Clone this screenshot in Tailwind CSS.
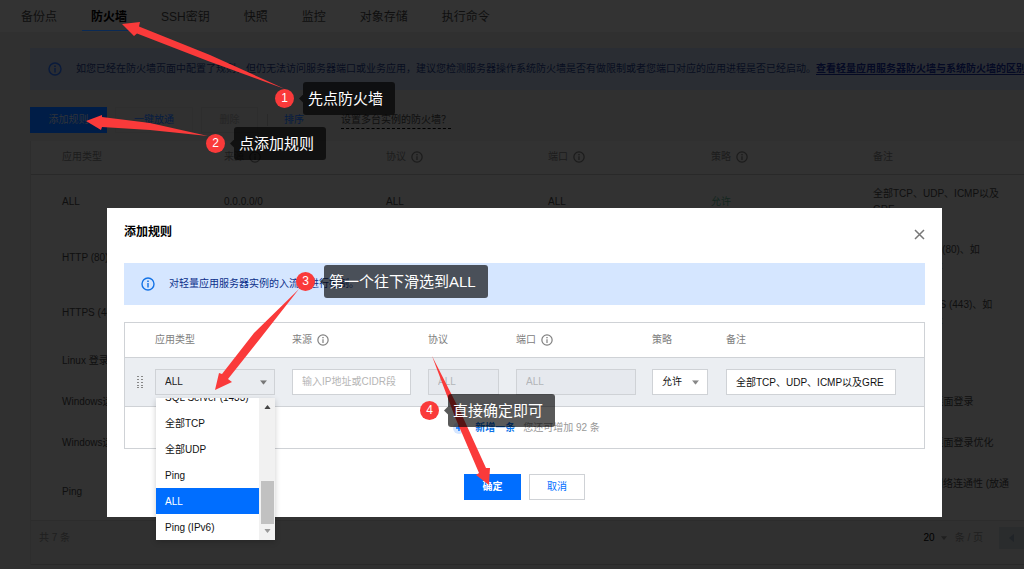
<!DOCTYPE html>
<html lang="zh-CN">

<head>
    <meta charset="UTF-8">
    <meta name="viewport" content="width=device-width, initial-scale=1.0">
    <title>防火墙 - 轻量应用服务器</title>
    <script src="https://cdn.jsdelivr.net/npm/@tailwindcss/browser@4"></script>
</head>

<body class="relative h-screen overflow-hidden bg-[#303030] font-['Liberation_Sans','Noto_Sans_CJK_SC',sans-serif] text-[10px] leading-4 text-[#0f0f0f]">
    <svg class="hidden">
        <symbol id="info" viewBox="0 0 14 14">
            <circle cx="7" cy="7" r="6" fill="none" stroke="currentColor" stroke-width="1.4" />
            <path d="M6.2 3.4h1.6v1.5H6.2zM6.3 6h1.4v4.6H6.3z" fill="currentColor" />
        </symbol>
        <symbol id="caret" viewBox="0 0 8 5">
            <path d="M0 0h8L4 5z" fill="currentColor" />
        </symbol>
    </svg>

    <!-- Página de fundo -->
    <nav class="flex h-8 gap-4 bg-[#333333] pl-3 text-xs whitespace-nowrap">
        <a href="#" class="px-[9px] pt-[9px]">备份点</a>
        <a href="#" class="h-[31px] border-b border-[#0a2a55] px-[9px] pt-[9px] font-bold text-black">防火墙</a>
        <a href="#" class="px-[9px] pt-[9px]">SSH密钥</a>
        <a href="#" class="px-[9px] pt-[9px]">快照</a>
        <a href="#" class="px-[9px] pt-[9px]">监控</a>
        <a href="#" class="px-[9px] pt-[9px]">对象存储</a>
        <a href="#" class="px-[9px] pt-[9px]">执行命令</a>
    </nav>

    <main class="overflow-hidden pt-4 pl-[30px]">
        <div class="flex h-[42px] items-center bg-[#2a2d33] pl-[18px] whitespace-nowrap text-[#080d20]">
            <svg class="mr-[14px] size-[14px] shrink-0 text-[#0a1b3c]"><use href="#info" /></svg>
            <p>如您已经在防火墙页面中配置了规则，但仍无法访问服务器端口或业务应用，建议您检测服务器操作系统防火墙是否有做限制或者您端口对应的应用进程是否已经启动。<a href="#" class="font-bold text-[#050a24] underline underline-offset-2">查看轻量应用服务器防火墙与系统防火墙的区别</a></p>
        </div>

        <div class="flex items-center pt-[17px] whitespace-nowrap">
            <button class="h-[26px] w-[77px] bg-[#001d47] text-[#30343a]">添加规则</button>
            <button class="ml-2 h-[26px] w-[78px] border border-[#2e2e2e] text-[#061c42]">一键放通</button>
            <button class="ml-2 h-[26px] w-[57px] border border-[#2d2d2d] text-[#252525]" disabled>删除</button>
            <span class="ml-[9px] h-3 w-px bg-[#292929]"></span>
            <button class="ml-2 h-[26px] w-[36px] text-[#061c42]">排序</button>
            <a href="#" class="ml-[29px] border-b border-dashed border-black leading-4">设置多台实例的防火墙？</a>
        </div>

        <div class="mt-2 border-l border-[#2d2d2d] bg-[#323232]">
            <table class="w-[1050px] table-fixed border-b border-[#2c2c2c] text-left whitespace-nowrap">
                <colgroup>
                    <col class="w-[193px]">
                    <col class="w-[162px]">
                    <col class="w-[162px]">
                    <col class="w-[163px]">
                    <col class="w-[162px]">
                    <col>
                </colgroup>
                <thead class="text-[#1c1c1c]">
                    <tr class="h-[33px] border-b border-[#292929]">
                        <th class="pl-[31px] font-normal">应用类型</th>
                        <th class="font-normal"><span class="flex items-center gap-[5px]">来源<svg class="size-3"><use href="#info" /></svg></span></th>
                        <th class="font-normal"><span class="flex items-center gap-[5px]">协议<svg class="size-3"><use href="#info" /></svg></span></th>
                        <th class="font-normal"><span class="flex items-center gap-[5px]">端口<svg class="size-3"><use href="#info" /></svg></span></th>
                        <th class="font-normal"><span class="flex items-center gap-[5px]">策略<svg class="size-3"><use href="#info" /></svg></span></th>
                        <th class="font-normal">备注</th>
                    </tr>
                </thead>
                <tbody>
                    <tr class="h-[56px]">
                        <td class="pl-[31px]">ALL</td>
                        <td>0.0.0.0/0</td>
                        <td>ALL</td>
                        <td>ALL</td>
                        <td class="text-[#14271f]">允许</td>
                        <td>全部TCP、UDP、ICMP以及<br>GRE</td>
                    </tr>
                    <tr class="h-[55px]">
                        <td class="pl-[31px]">HTTP (80)</td>
                        <td>0.0.0.0/0</td>
                        <td>TCP</td>
                        <td>80</td>
                        <td class="text-[#14271f]">允许</td>
                        <td>Web服务HTTP (80)、如<br>Apache、Nginx</td>
                    </tr>
                    <tr class="h-[55px]">
                        <td class="pl-[31px]">HTTPS (443)</td>
                        <td>0.0.0.0/0</td>
                        <td>TCP</td>
                        <td>443</td>
                        <td class="text-[#14271f]">允许</td>
                        <td>Web服务HTTPS (443)、如<br>Apache、Nginx</td>
                    </tr>
                    <tr class="h-[42px]">
                        <td class="pl-[31px]">Linux 登录 (22)</td>
                        <td>0.0.0.0/0</td>
                        <td>TCP</td>
                        <td>22</td>
                        <td class="text-[#14271f]">允许</td>
                        <td>Linux登录</td>
                    </tr>
                    <tr class="h-10">
                        <td class="pl-[31px]">Windows远程桌面</td>
                        <td>0.0.0.0/0</td>
                        <td>TCP</td>
                        <td>3389</td>
                        <td class="text-[#14271f]">允许</td>
                        <td>Windows远程桌面登录</td>
                    </tr>
                    <tr class="h-[42px]">
                        <td class="pl-[31px]">Windows远程桌面</td>
                        <td>0.0.0.0/0</td>
                        <td>UDP</td>
                        <td>3389</td>
                        <td class="text-[#14271f]">允许</td>
                        <td>Windows远程桌面登录优化</td>
                    </tr>
                    <tr class="h-[56px]">
                        <td class="pl-[31px]">Ping</td>
                        <td>0.0.0.0/0</td>
                        <td>ICMP</td>
                        <td>ALL</td>
                        <td class="text-[#14271f]">允许</td>
                        <td>通过Ping测试网络连通性 (放通<br>ALL ICMP)</td>
                    </tr>
                </tbody>
            </table>
            <div class="flex h-[44px] items-center justify-between border-b border-[#292929] bg-[#303030] pb-[8px] pl-2 whitespace-nowrap text-[#1f1f1f]">
                <span>共 7 条</span>
                <div class="flex items-center">
                    <span class="text-black">20</span>
                    <svg class="mx-[6px] h-1 w-[6px]"><use href="#caret" /></svg>
                    <span class="ml-[2px]">条 / 页</span>
                    <button class="ml-4 h-[22px] w-[25px] bg-[#2a2c2d]" aria-label="上一页"><svg class="mx-auto h-2 w-2" viewBox="0 0 8 8"><path d="M6 0v8L1 4z" fill="#202428" /></svg></button>
                </div>
            </div>
        </div>
    </main>

    <!-- Modal -->
    <div class="absolute inset-0 flex items-start justify-center pt-[208px] pl-[25px]">
        <section role="dialog" aria-labelledby="titulo" class="w-[835px] bg-white px-[17px] pb-[17px] text-[#111111]">
            <div class="flex h-[55px] items-start justify-between">
                <h2 id="titulo" class="pt-4 text-xs font-bold text-black">添加规则</h2>
                <button class="pt-[21px]" aria-label="关闭">
                    <svg class="size-[11px]" viewBox="0 0 11 11"><path d="M1 1l9 9M10 1l-9 9" stroke="#777" stroke-width="1.5" /></svg>
                </button>
            </div>

            <div class="flex h-[42px] items-center bg-[#d5e6ff] pl-[17px] text-[#0b2f8a]">
                <svg class="mr-[14px] size-[14px] text-[#1473e6]"><use href="#info" /></svg>
                对轻量应用服务器实例的入流量进行控制。
            </div>

            <form class="mt-[17px]">
                <div class="border border-[#cfd2d6]">
                    <table class="w-full table-fixed text-left">
                        <colgroup>
                            <col class="w-[30px]">
                            <col class="w-[137px]">
                            <col class="w-[136px]">
                            <col class="w-[88px]">
                            <col class="w-[136px]">
                            <col class="w-[74px]">
                            <col>
                        </colgroup>
                        <thead class="text-[#808080]">
                            <tr class="h-[34px] border-b border-[#cfd2d6]">
                                <th></th>
                                <th class="font-normal">应用类型</th>
                                <th class="font-normal"><span class="flex items-center gap-[5px]">来源<svg class="size-3"><use href="#info" /></svg></span></th>
                                <th class="font-normal">协议</th>
                                <th class="font-normal"><span class="flex items-center gap-[5px]">端口<svg class="size-3"><use href="#info" /></svg></span></th>
                                <th class="font-normal">策略</th>
                                <th class="font-normal">备注</th>
                            </tr>
                        </thead>
                        <tbody>
                            <tr class="h-[49px] border-b border-[#cfd2d6] bg-[#ebeef2]">
                                <td>
                                    <svg class="ml-3 h-3 w-[6px]" viewBox="0 0 6 12" fill="#888">
                                        <path d="M0 0h2v1H0zM4 0h2v1H4zM0 3h2v1H0zM4 3h2v1H4zM0 6h2v1H0zM4 6h2v1H4zM0 9h2v1H0zM4 9h2v1H4zM0 11h2v1H0zM4 11h2v1H4z" />
                                    </svg>
                                </td>
                                <td class="pr-[17px]">
                                    <div class="relative">
                                        <select aria-label="应用类型" class="block h-[26px] w-full appearance-none border border-[#cfd2d6] bg-[#e9ecf0] px-[9px] text-[#222222]">
                                            <option>ALL</option>
                                        </select>
                                        <svg class="pointer-events-none absolute top-[11px] right-2 h-[5px] w-[7px] text-[#777777]" viewBox="0 0 8 5"><use href="#caret" /></svg>
                                        <!-- lista aberta -->
                                        <div class="absolute top-[29px] left-px flex h-[142px] w-[119px] bg-white shadow-[0_2px_6px_rgba(0,0,0,0.2)]">
                                            <ul role="listbox" class="flex flex-1 flex-col justify-end overflow-hidden leading-[27px] whitespace-nowrap *:h-[26px] *:shrink-0 *:pl-[9px]">
                                                <li role="option">SQL Server (1433)</li>
                                                <li role="option">全部TCP</li>
                                                <li role="option">全部UDP</li>
                                                <li role="option">Ping</li>
                                                <li role="option" aria-selected="true" class="bg-[#006eff] text-white">ALL</li>
                                                <li role="option">Ping (IPv6)</li>
                                            </ul>
                                            <div class="flex w-4 flex-col items-center bg-[#f1f1f1] py-[7px]">
                                                <svg class="h-1 w-[7px] rotate-180 text-[#444444]" viewBox="0 0 8 5"><use href="#caret" /></svg>
                                                <div class="mt-auto mb-[5px] h-[43px] w-[13px] bg-[#c1c1c1]"></div>
                                                <svg class="h-1 w-[7px] text-[#999999]" viewBox="0 0 8 5"><use href="#caret" /></svg>
                                            </div>
                                        </div>
                                    </div>
                                </td>
                                <td class="pr-[17px]"><input type="text" aria-label="来源" placeholder="输入IP地址或CIDR段" class="block h-[26px] w-full border border-[#cfd2d6] bg-white px-[9px] placeholder:text-[#b5b5b5]"></td>
                                <td class="pr-[17px]"><input type="text" aria-label="协议" value="ALL" disabled class="block h-[26px] w-full border border-[#cfd2d6] bg-[#e6e9ee] px-[9px] text-[#b3b5b8]"></td>
                                <td class="pr-4"><input type="text" aria-label="端口" value="ALL" disabled class="block h-[26px] w-full border border-[#cfd2d6] bg-[#e6e9ee] px-[9px] text-[#b3b5b8]"></td>
                                <td class="pr-[18px]">
                                    <div class="relative">
                                        <select aria-label="策略" class="block h-[26px] w-full appearance-none border border-[#cfd2d6] bg-white px-[9px]">
                                            <option>允许</option>
                                        </select>
                                        <svg class="pointer-events-none absolute top-[11px] right-[9px] h-[5px] w-[7px] text-[#888888]" viewBox="0 0 8 5"><use href="#caret" /></svg>
                                    </div>
                                </td>
                                <td class="pr-[28px]"><input type="text" aria-label="备注" value="全部TCP、UDP、ICMP以及GRE" class="block h-[26px] w-full border border-[#cfd2d6] bg-white px-[9px]"></td>
                            </tr>
                        </tbody>
                    </table>
                    <div class="flex h-[41px] items-center justify-center pt-[2px] pl-1 text-[#999999]">
                        <svg class="mr-[10px] size-3" viewBox="0 0 12 12"><circle cx="6" cy="6" r="6" fill="#d5e6ff" /><path d="M6 3v6M3 6h6" stroke="#006eff" stroke-width="1.4" /></svg>
                        <a href="#" class="mr-2 font-bold text-[#0a72e8]">新增一条</a>
                        您还可增加 92 条
                    </div>
                </div>

                <div class="mt-[25px] flex justify-center gap-2">
                    <button type="submit" class="h-[26px] w-[57px] bg-[#006eff] font-bold text-white">确定</button>
                    <button type="button" class="h-[26px] w-[56px] border border-[#cfd2d6] text-[#006eff]">取消</button>
                </div>
            </form>
        </section>
    </div>

    <!-- Setas e passos -->
    <svg class="pointer-events-none absolute inset-0 size-full" fill="#fa3a3a">
        <path d="M285 89 210 55 139 26.500 140 22 122 24 134 36 137 33.500 208 61z" />
        <path d="M208 136 150 123 102 117 102 115 86 121 101 130 102 127 150 130z" />
        <path d="M299 289 254 333 222 374 219 373 215 390 232 382 228 379 259 340z" />
        <path d="M432 356 455 417 479 473 476 475 489 485 490 468 486 468 461 413z" />
    </svg>

    <div class="absolute top-[82px] left-[275px] flex items-center text-[15px] text-white">
        <span class="mr-[5px] size-[19px] rounded-full bg-[#fa3a3a] text-center text-xs leading-[19px]">1</span>
        <span class="h-2 w-1 bg-black/65 [clip-path:polygon(0_50%,100%_0,100%_100%)]"></span>
        <span class="h-[33px] rounded-[3px] bg-black/65 pr-3 pl-[5px] leading-[33px] whitespace-nowrap">先点防火墙</span>
    </div>
    <div class="absolute top-[127px] left-[206px] flex items-center text-[15px] text-white">
        <span class="mr-[5px] size-[19px] rounded-full bg-[#fa3a3a] text-center text-xs leading-[19px]">2</span>
        <span class="h-2 w-1 bg-black/65 [clip-path:polygon(0_50%,100%_0,100%_100%)]"></span>
        <span class="h-[33px] rounded-[3px] bg-black/65 pr-3 pl-[5px] leading-[33px] whitespace-nowrap">点添加规则</span>
    </div>
    <div class="absolute top-[265px] left-[296px] flex items-center text-[15px] text-white">
        <span class="mr-[5px] size-[19px] rounded-full bg-[#fa3a3a] text-center text-xs leading-[19px]">3</span>
        <span class="h-2 w-1 bg-black/65 [clip-path:polygon(0_50%,100%_0,100%_100%)]"></span>
        <span class="h-[33px] rounded-[3px] bg-black/65 pr-3 pl-[5px] leading-[33px] whitespace-nowrap">第一个往下滑选到ALL</span>
    </div>
    <div class="absolute top-[394px] left-[420px] flex items-center text-[15px] text-white">
        <span class="mr-[5px] size-[19px] rounded-full bg-[#fa3a3a] text-center text-xs leading-[19px]">4</span>
        <span class="h-2 w-1 bg-black/65 [clip-path:polygon(0_50%,100%_0,100%_100%)]"></span>
        <span class="h-[33px] rounded-[3px] bg-black/65 pr-3 pl-[5px] leading-[33px] whitespace-nowrap">直接确定即可</span>
    </div>
</body>

</html>
